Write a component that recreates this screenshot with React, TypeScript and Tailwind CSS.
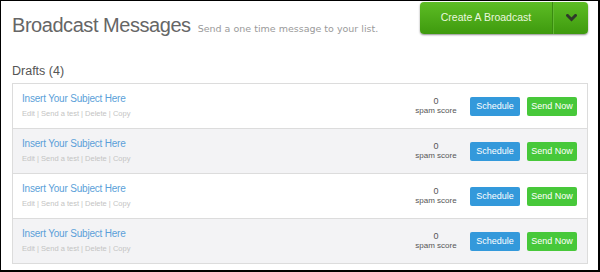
import React from "react";

const drafts = [0, 1, 2, 3];

function Chevron() {
    return (
        <svg width="11" height="8" viewBox="0 0 11 8">
            <polyline points="1.5,1.5 5.5,5.5 9.5,1.5" fill="none" stroke="#2f3a2a" strokeWidth="3" strokeLinecap="square"/>
        </svg>
    );
}

function DraftRow({alt}: {alt: boolean}) {
    return (
        <div className={`box-content flex items-center h-[44px] pl-[9px] pr-[10px] ${alt ? 'bg-[#f3f3f5]' : 'bg-white'}`}>
            <div className="flex-1 flex flex-col">
                <a className="text-[10px] tracking-[-0.2px] leading-[12px] text-[#5b9fd9]">Insert Your Subject Here</a>
                <div className="text-[7.5px] leading-[10px] mt-[4px] text-[#c4c4c4]">
                    Edit | Send a test | Delete | Copy
                </div>
            </div>
            <div className="flex flex-col items-center text-[#555] w-[44px] mr-[12px] whitespace-nowrap">
                <span className="text-[9px] leading-[9px]">0</span>
                <span className="text-[8px] leading-[9px]">spam score</span>
            </div>
            <button className="w-[50px] h-[19px] rounded-[2px] bg-[#3399db] text-white text-[9px] leading-[19px]">
                Schedule
            </button>
            <button className="w-[50px] h-[19px] rounded-[2px] bg-[#47c83a] text-white text-[9px] leading-[19px] ml-[7px]">
                Send Now
            </button>
        </div>
    );
}

export default function App() {
    return (
        <div className="w-[600px] h-[272px] bg-white border-black border-l border-t border-r-2 border-b-2 font-['Liberation_Sans',Arial,sans-serif]">
            <div className="flex justify-between items-start pl-[11px] pr-[10px] h-[35px]">
                <div className="flex items-baseline mt-[14px]">
                    <h1 className="text-[20px] tracking-[-0.45px] leading-none text-[#666]">Broadcast Messages</h1>
                    <span className="ml-[7px] text-[9.5px] text-[#9a9a9a] font-['DejaVu_Sans',Verdana,sans-serif]">
                        Send a one time message to your list.
                    </span>
                </div>
                <div className="mt-[1px] flex h-[32px] w-[168px] rounded-[4px] bg-gradient-to-b from-[#5dbd24] to-[#3e9a0d] shadow-[0_1px_2px_rgba(0,0,0,0.45)]">
                    <div className="w-[132px] flex items-center justify-center text-[10.5px] text-[#eaf7df]">
                        Create A Broadcast
                    </div>
                    <div className="w-px bg-[#3a8c10]"/>
                    <div className="flex-1 flex items-center justify-center border-l border-[#62b832]">
                        <Chevron/>
                    </div>
                </div>
            </div>
            <p className="mt-[27px] h-[17px] leading-[17px] pl-[11px] text-[12.5px] text-[#555]">Drafts (4)</p>
            <div className="mt-[3px] ml-[11px] mr-[10px] border border-[#dcdcdc] divide-y divide-[#dcdcdc]">
                {drafts.map((i) => (
                    <DraftRow key={i} alt={i % 2 === 1}/>
                ))}
            </div>
        </div>
    );
}
